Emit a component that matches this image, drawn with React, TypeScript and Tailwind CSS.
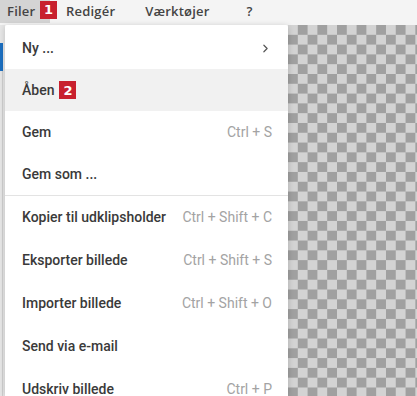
import { ChevronRight } from 'lucide-react'

type Item = { label: string; shortcut?: string; badge?: string; sub?: boolean; active?: boolean }

const first: Item[] = [
  { label: 'Ny ...', sub: true },
  { label: 'Åben', badge: '2', active: true },
  { label: 'Gem', shortcut: 'Ctrl + S' },
  { label: 'Gem som ...' },
]

const second: Item[] = [
  { label: 'Kopier til udklipsholder', shortcut: 'Ctrl + Shift + C' },
  { label: 'Eksporter billede', shortcut: 'Ctrl + Shift + S' },
  { label: 'Importer billede', shortcut: 'Ctrl + Shift + O' },
  { label: 'Send via e-mail' },
  { label: 'Udskriv billede', shortcut: 'Ctrl + P' },
]

function Badge({ n }: { n: string }) {
  return (
    <span className="inline-flex items-center justify-center w-[17px] h-[18px] bg-[#c8202e] text-white text-[13px] font-bold leading-none font-['DejaVu_Sans',sans-serif]">
      {n}
    </span>
  )
}

function Row({ item, h }: { item: Item; h: string }) {
  return (
    <div className={`flex items-center pl-[17px] pr-[16px] ${h} ${item.active ? 'bg-[#f1f1f1]' : ''}`}>
      <span className="flex items-center gap-[5px] text-[14px] font-medium text-[#3a3a3a]">
        {item.label}
        {item.badge && <Badge n={item.badge} />}
      </span>
      <span className="ml-auto text-[14px] text-[#a3a3a3]">{item.shortcut}</span>
      {item.sub && <ChevronRight size={13} strokeWidth={2.2} className="text-[#555]" />}
    </div>
  )
}

export default function App() {
  return (
    <div className="w-[417px] h-[396px] overflow-hidden bg-[#f4f4f4] flex flex-col font-['Roboto',sans-serif]">
      <div className="h-[25px] flex items-start shrink-0 font-['Open_Sans',sans-serif] text-[13px] font-semibold text-[#444] tracking-[0.2px]">
        <div className="h-[23px] w-[50px] bg-[#d4d4d4] flex items-center pl-[7px] shrink-0">Filer</div>
        <div className="-ml-[10px]">
          <Badge n="1" />
        </div>
        <span className="ml-[9px] mt-[2px]">Redigér</span>
        <span className="ml-[30px] mt-[2px]">Værktøjer</span>
        <span className="ml-[37px] mt-[2px]">?</span>
      </div>
      <div className="flex flex-1 min-h-0">
        <div className="w-[5px] bg-[#e6e6e6] flex flex-col">
          <div className="h-[18px]" />
          <div className="h-[28px] w-[3px] bg-[#1c6fc0]" />
          <div className="flex-1 w-[3px] border-r border-[#cfcfcf]" />
        </div>
        <div className="w-[283px] bg-white shadow-[0_1px_6px_rgba(0,0,0,0.18)] pt-[2px] rounded-t-[2px] relative z-10">
          {first.map((it) => (
            <Row key={it.label} item={it} h="h-[42px]" />
          ))}
          <div className="h-px bg-[#e3e3e3]" />
          {second.map((it) => (
            <Row key={it.label} item={it} h="h-[43px]" />
          ))}
        </div>
        <div className="flex-1 bg-[conic-gradient(#a0a0a0_25%,#d3d3d3_0_50%,#a0a0a0_0_75%,#d3d3d3_0)] bg-size-[19.6px_19.6px]" />
      </div>
    </div>
  )
}
